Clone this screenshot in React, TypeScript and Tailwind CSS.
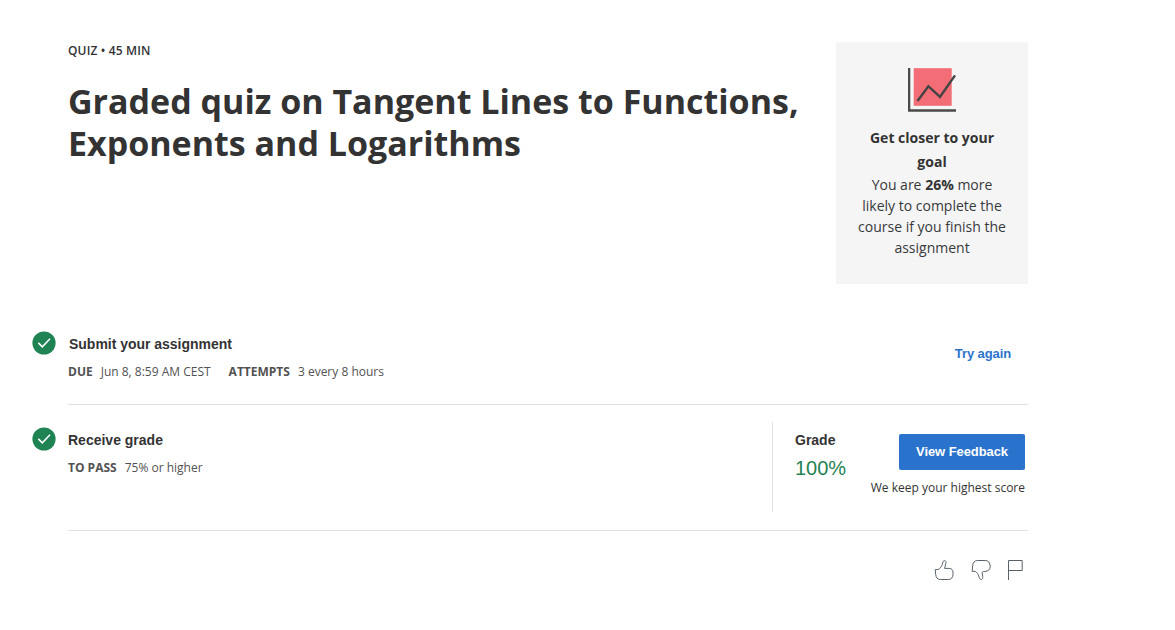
import type { ReactNode } from "react";

function CheckBadge() {
  return (
    <svg className="h-6 w-6 shrink-0" viewBox="0 0 24 24" fill="none" aria-label="Completed">
      <circle cx="12" cy="12" r="11.6" fill="#1f8354" />
      <path d="M6.4 11.9l3.9 3.9 7.7-8" stroke="#fff" strokeWidth="1.6" />
    </svg>
  );
}

function GoalChart() {
  return (
    <svg className="h-11 w-12" viewBox="0 0 48 44" fill="none">
      <rect x="5.7" y="0.2" width="38" height="37.6" fill="#f26d76" />
      <path d="M1.1 0v42.5H48" stroke="#4a4a4a" strokeWidth="2.4" />
      <path d="M9.5 33L20.4 18.2 32 29 47 7.4" stroke="#444" strokeWidth="2.4" />
    </svg>
  );
}

function GoalCard() {
  return (
    <aside className="flex h-[242px] w-48 flex-col items-center bg-[#f5f5f5] pt-[26px] text-center text-[#373a3c]">
      <GoalChart />
      <h2 className="mt-[14px] w-[150px] text-[14px] leading-6 font-bold text-[#333]">Get closer to your goal</h2>
      <p className="w-[152px] text-[14px] leading-[21px]">
        You are <b className="text-[#333]">26%</b> more likely to complete the course if you finish the assignment
      </p>
    </aside>
  );
}

function Detail({ label, children }: { label: string; children: ReactNode }) {
  return (
    <div className="flex gap-2 whitespace-nowrap">
      <span className="font-bold">{label}</span>
      <span>{children}</span>
    </div>
  );
}

function Feedback() {
  return (
    <div className="flex gap-[17px] pr-1">
      <button aria-label="Like" className="h-6 w-5">
        <svg className="h-6 w-5" viewBox="0 0 20 24" fill="none" stroke="#59616b" strokeWidth="1">
          <path d="M1.2 11.6H4C6.2 10.2 7.9 8.4 8.4 6.2C8.8 4.4 9.2 2.5 10.4 2.5C11.8 2.5 12.2 4 11.8 5.6L10.6 10.4H15.2C17.6 10.4 19 12 19 14V16.4C19 19.6 17.2 21.5 14.4 21.5H6.4C3.2 21.5 2 19.4 1.7 16.4Z" />
        </svg>
      </button>
      <button aria-label="Dislike" className="h-6 w-5">
        <svg className="h-6 w-5" viewBox="0 0 20 24" fill="none" stroke="#59616b" strokeWidth="1">
          <path d="M1.2 13.4H4.3C6 14.4 7 16 7.7 18C8.3 19.8 8.9 21.5 10.2 21.5C11.5 21.5 12 20 11.7 18.4L11 14.4C11.8 13.6 12.8 13.5 14 13.5C17.2 13.5 19.2 11.4 19.2 8.4C19.2 4.8 17.4 2.5 14.2 2.5H6.6C3.4 2.5 2 4.6 1.7 7.6Z" />
        </svg>
      </button>
      <button aria-label="Report" className="h-6 w-4">
        <svg className="h-6 w-4" viewBox="0 0 16 24" fill="none" stroke="#59616b" strokeWidth="1">
          <path d="M0.5 22V2.5H14.2V12.5H0.5" />
        </svg>
      </button>
    </div>
  );
}

export default function App() {
  return (
    <main className="min-h-[630px] bg-white pt-[42px] pl-8 font-['Open_Sans',sans-serif] text-[#333]">
      <div className="w-[996px]">
        <header className="flex justify-between pl-9">
          <div>
            <p className="text-[12px] leading-[18px] font-semibold tracking-[0.15px]">QUIZ • 45 MIN</p>
            <h1 className="mt-5 text-[34px] leading-[42px] font-bold whitespace-nowrap">
              Graded quiz on Tangent Lines to Functions,
              <br />
              Exponents and Logarithms
            </h1>
          </div>
          <GoalCard />
        </header>

        <section className="mt-[47px] flex h-[74px] gap-3">
          <CheckBadge />
          <div className="flex flex-1 justify-between border-b border-[#e1e1e1]">
            <div>
              <h2 className="pt-0.5 pl-px font-['Liberation_Sans',sans-serif] text-[14px] leading-[22px] font-bold tracking-[-0.02px]">
                Submit your assignment
              </h2>
              <div className="mt-2 flex gap-[18px] text-[12px] leading-[18px] text-[#525252]">
                <Detail label="DUE">Jun 8, 8:59 AM CEST</Detail>
                <Detail label="ATTEMPTS">3 every 8 hours</Detail>
              </div>
            </div>
            <button className="mt-[13px] mr-[17px] h-5 font-['Liberation_Sans',sans-serif] text-[13px] leading-5 font-bold tracking-[-0.1px] text-[#2a73cc]">
              Try again
            </button>
          </div>
        </section>

        <section className="mt-[22px] flex h-[104px] gap-3">
          <CheckBadge />
          <div className="flex flex-1 justify-between border-b border-[#e1e1e1]">
            <div>
              <h2 className="pt-0.5 font-['Liberation_Sans',sans-serif] text-[14px] leading-[22px] font-bold">Receive grade</h2>
              <div className="mt-2 text-[12px] leading-[18px] text-[#525252]">
                <Detail label="TO PASS">75% or higher</Detail>
              </div>
            </div>
            <div className="-mt-[5px] flex h-[90px] w-64 justify-between border-l border-[#e1e1e1] pr-[3px] pl-[22px]">
              <div className="font-['Liberation_Sans',sans-serif]">
                <h3 className="pt-[7px] text-[14px] leading-[22px] font-bold">Grade</h3>
                <p className="mt-1 text-[20px] leading-[26px] text-[#1f8354]">100%</p>
              </div>
              <div className="flex flex-col items-end pt-3">
                <button className="h-9 w-[126px] rounded-[2px] bg-[#2a73cc] font-['Liberation_Sans',sans-serif] text-[13px] font-bold tracking-[-0.08px] text-white">
                  View Feedback
                </button>
                <p className="mt-[9px] text-[12px] leading-[18px] whitespace-nowrap">We keep your highest score</p>
              </div>
            </div>
          </div>
        </section>

        <footer className="mt-[27px] flex justify-end">
          <Feedback />
        </footer>
      </div>
    </main>
  );
}
